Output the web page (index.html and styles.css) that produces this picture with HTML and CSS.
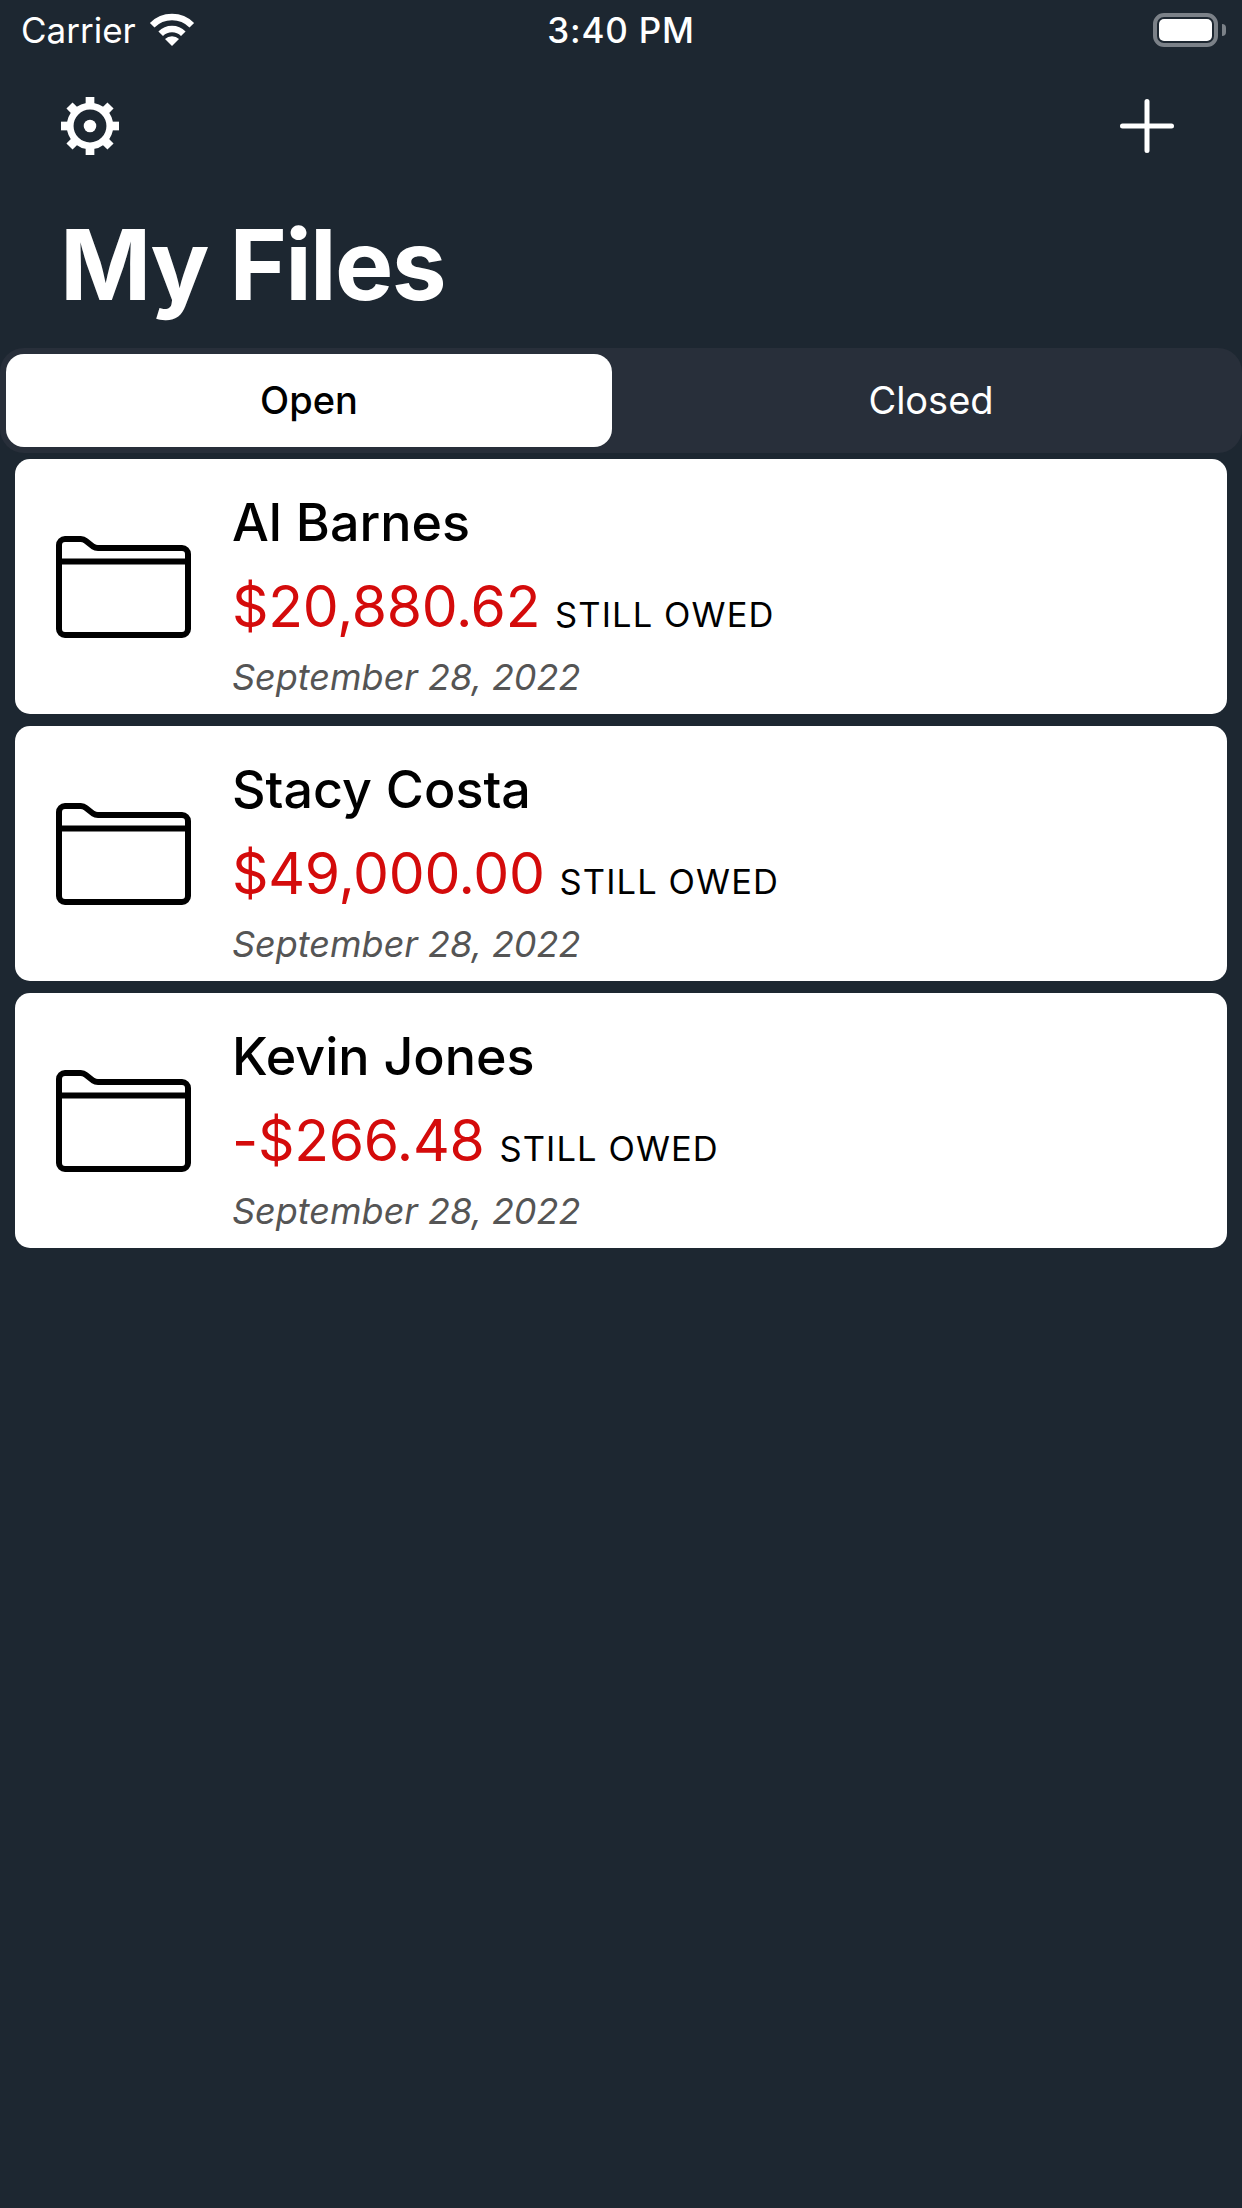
FILE: index.html
```html
<!DOCTYPE html>
<html lang="en">
<head>
    <meta charset="UTF-8">
    <meta name="viewport" content="width=device-width, initial-scale=1.0">
    <title>My Files</title>
    <link rel="stylesheet" href="styles.css">
</head>
<body>
    <div class="status-bar">
        <div class="status-left">
            <span class="carrier">Carrier</span>
            <svg class="wifi" width="48" height="36" viewBox="0 0 48 36">
                <path d="M24 35 L17 28 A10 10 0 0 1 31 28 Z" fill="#fff"/>
                <path d="M12.7 22.7 A16 16 0 0 1 35.3 22.7" fill="none" stroke="#fff" stroke-width="6.5"/>
                <path d="M4.2 14.2 A28 28 0 0 1 43.8 14.2" fill="none" stroke="#fff" stroke-width="6.5"/>
            </svg>
        </div>
        <div class="time">3:40 PM</div>
        <div class="status-right">
            <div class="battery"><div class="battery-level"></div></div>
            <div class="battery-cap"></div>
        </div>
    </div>

    <div class="nav-bar">
        <svg class="gear" width="58" height="58" viewBox="0 0 60 60">
            <g fill="#fff">
                <rect x="25.500" y="0" width="9" height="12"/>
                <rect x="25.500" y="0" width="9" height="12" transform="rotate(45 30 30)"/>
                <rect x="25.500" y="0" width="9" height="12" transform="rotate(90 30 30)"/>
                <rect x="25.500" y="0" width="9" height="12" transform="rotate(135 30 30)"/>
                <rect x="25.500" y="0" width="9" height="12" transform="rotate(180 30 30)"/>
                <rect x="25.500" y="0" width="9" height="12" transform="rotate(225 30 30)"/>
                <rect x="25.500" y="0" width="9" height="12" transform="rotate(270 30 30)"/>
                <rect x="25.500" y="0" width="9" height="12" transform="rotate(315 30 30)"/>
                <circle cx="30" cy="30" r="6.5"/>
            </g>
            <circle cx="30" cy="30" r="20.5" fill="none" stroke="#fff" stroke-width="7"/>
        </svg>
        <svg class="plus" width="54" height="54" viewBox="0 0 54 54">
            <path d="M27 2.5 V51.5 M2.5 27 H51.5" stroke="#fff" stroke-width="5" stroke-linecap="round"/>
        </svg>
    </div>

    <h1 class="page-title">My Files</h1>

    <div class="segments">
        <div class="segment segment-active">Open</div>
        <div class="segment">Closed</div>
    </div>

    <div class="file-list">
        <div class="file-card">
            <svg class="folder" width="136" height="102" viewBox="0 0 136 102">
                <path d="M3 25.5 V9 A6 6 0 0 1 9 3 H24 A9 9 0 0 1 30 5 L37 10.500 A9 9 0 0 0 42 12 H126 A6 6 0 0 1 132 18 V93 A6 6 0 0 1 126 99 H9 A6 6 0 0 1 3 93 Z M3 25.500 H132" fill="none" stroke="#000" stroke-width="6" stroke-linejoin="round"/>
            </svg>
            <div class="file-info">
                <div class="file-name">Al Barnes</div>
                <div class="file-balance"><span class="amount">$20,880.62</span><span class="owed">STILL OWED</span></div>
                <div class="file-date">September 28, 2022</div>
            </div>
        </div>
        <div class="file-card">
            <svg class="folder" width="136" height="102" viewBox="0 0 136 102">
                <path d="M3 25.5 V9 A6 6 0 0 1 9 3 H24 A9 9 0 0 1 30 5 L37 10.500 A9 9 0 0 0 42 12 H126 A6 6 0 0 1 132 18 V93 A6 6 0 0 1 126 99 H9 A6 6 0 0 1 3 93 Z M3 25.500 H132" fill="none" stroke="#000" stroke-width="6" stroke-linejoin="round"/>
            </svg>
            <div class="file-info">
                <div class="file-name">Stacy Costa</div>
                <div class="file-balance"><span class="amount">$49,000.00</span><span class="owed">STILL OWED</span></div>
                <div class="file-date">September 28, 2022</div>
            </div>
        </div>
        <div class="file-card">
            <svg class="folder" width="136" height="102" viewBox="0 0 136 102">
                <path d="M3 25.5 V9 A6 6 0 0 1 9 3 H24 A9 9 0 0 1 30 5 L37 10.500 A9 9 0 0 0 42 12 H126 A6 6 0 0 1 132 18 V93 A6 6 0 0 1 126 99 H9 A6 6 0 0 1 3 93 Z M3 25.500 H132" fill="none" stroke="#000" stroke-width="6" stroke-linejoin="round"/>
            </svg>
            <div class="file-info">
                <div class="file-name">Kevin Jones</div>
                <div class="file-balance"><span class="amount">-$266.48</span><span class="owed">STILL OWED</span></div>
                <div class="file-date">September 28, 2022</div>
            </div>
        </div>
    </div>
</body>
</html>
```

FILE: styles.css
```css
html, body {
    height: 100%;
}
body {
    margin: 0;
    background: #1d2731;
    color: #fff;
    font-family: Inter, "Noto Sans", sans-serif;
    overflow: hidden;
}

.status-bar {
    display: grid;
    grid-template-columns: 1fr auto 1fr;
    align-items: center;
    height: 60px;
    padding: 0 16px;
}
.status-left {
    display: flex;
    align-items: center;
    gap: 12px;
    padding-left: 5px;
}
.carrier {
    font-size: 35px;
}
.wifi {
    margin-top: -2px;
}
.time {
    font-size: 35px;
    font-weight: 500;
    letter-spacing: 0.8px;
}
.status-right {
    display: flex;
    align-items: center;
    justify-content: flex-end;
    gap: 4px;
}
.battery {
    box-sizing: border-box;
    width: 65px;
    height: 34px;
    padding: 2px;
    border: 4px solid #7b8188;
    border-radius: 11px;
}
.battery-level {
    height: 100%;
    background: #fff;
    border-radius: 5px;
}
.battery-cap {
    width: 4px;
    height: 12px;
    background: #7b8188;
    border-radius: 0 6px 6px 0;
}

.nav-bar {
    display: flex;
    justify-content: space-between;
    align-items: center;
    height: 54px;
    padding: 39px 68px 0 61px;
}

.page-title {
    margin: 0;
    padding: 50px 0 0 60px;
    font-size: 98px;
    line-height: 124px;
    font-weight: 700;
    letter-spacing: -1.7px;
}

.segments {
    display: flex;
    gap: 14px;
    margin-top: 21px;
    padding: 6px;
    height: 93px;
    background: #282f3a;
    border-radius: 24px;
}
.segment {
    flex: 1;
    display: flex;
    align-items: center;
    justify-content: center;
    padding-bottom: 2px;
    font-size: 38px;
}
.segment-active {
    flex: 0 0 606px;
    background: #fff;
    color: #000;
    font-weight: 500;
    border-radius: 18px;
}

.file-list {
    display: flex;
    flex-direction: column;
    gap: 12px;
    padding: 6px 15px 0;
}
.file-card {
    display: flex;
    align-items: center;
    height: 255px;
    box-sizing: border-box;
    padding-left: 41px;
    background: #fff;
    color: #000;
    border-radius: 15px;
}
.folder {
    margin-right: 40px;
    flex-shrink: 0;
}
.file-info {
    align-self: flex-start;
    padding-top: 32px;
}
.file-name {
    font-size: 52px;
    font-weight: 500;
    line-height: 64px;
}
.file-balance {
    display: flex;
    align-items: baseline;
    gap: 15px;
    margin-top: 14px;
    line-height: 76px;
}
.amount {
    font-size: 57px;
    letter-spacing: -0.3px;
    color: #d40b0b;
}
.owed {
    font-size: 34.5px;
    letter-spacing: 1.1px;
}
.file-date {
    font-size: 36px;
    font-style: italic;
    color: #555;
    line-height: 49px;
}
```
